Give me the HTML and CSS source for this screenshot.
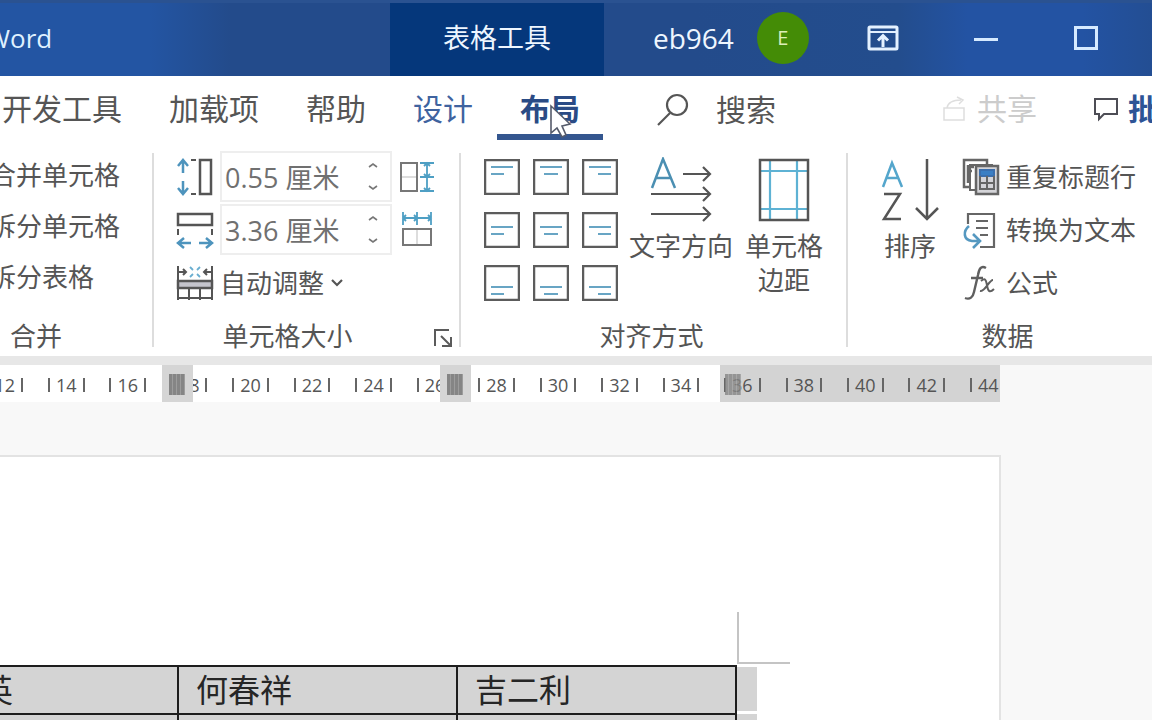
FILE: index.html
```html
<!DOCTYPE html>
<html lang="zh-CN">
<head>
<meta charset="utf-8">
<title>Word</title>
<link rel="stylesheet" href="styles.css">
</head>
<body>
<header class="titlebar">
  <div class="brand"><span>Word</span></div>
  <div class="context">表格工具</div>
  <div class="account"><span>eb964</span><span class="avatar">E</span></div>
  <div class="window">
    <button class="win" aria-label="功能区显示选项"><svg width="32" height="26" viewBox="0 0 32 26" fill="none" stroke="#e4f1ff" stroke-width="3"><rect x="2" y="2" width="28" height="22" rx="1"/><path d="M3 7H29" stroke-width="2"/><path d="M16 22V11M11 15.500L16 10.500L21 15.500"/></svg></button>
    <button class="win" aria-label="最小化"><svg width="26" height="26" viewBox="0 0 26 26"><path d="M1 14.500H25" stroke="#d6eaff" stroke-width="3"/></svg></button>
    <button class="win" aria-label="最大化"><svg width="26" height="26" viewBox="0 0 26 26" fill="none" stroke="#d6eaff" stroke-width="3"><rect x="2.500" y="2.500" width="21" height="21"/></svg></button>
  </div>
</header>

<div class="tabrow">
  <nav class="tabs">
    <button class="tab">开发工具</button>
    <button class="tab">加载项</button>
    <button class="tab">帮助</button>
    <button class="tab tool">设计</button>
    <button class="tab tool active">布局
      <svg class="cursor" width="24" height="36" viewBox="0 0 24 36"><path d="M2 2V29L8 24L13 33L17 31L13 22L21 20Z" fill="#fff" stroke="#555b6b" stroke-width="1.600"/></svg>
    </button>
  </nav>
  <button class="search"><svg width="34" height="34" viewBox="0 0 34 34" fill="none" stroke="#555" stroke-width="2.200"><circle cx="21" cy="12" r="10"/><path d="M14 20L2 32"/></svg>搜索</button>
  <div class="actions">
    <button class="share" disabled><svg width="26" height="26" viewBox="0 0 26 26" fill="none" stroke="#dedede" stroke-width="1.500"><path d="M2 12H22V24H2ZM5 12C6 6 12 4 19 4M15 1L21 4L17 8"/></svg>共享</button>
    <button class="comment"><svg width="26" height="26" viewBox="0 0 26 26" fill="none" stroke="#4d4d55" stroke-width="2"><path d="M2 3H24V18H11L6 23V18H2Z"/></svg>批注</button>
  </div>
</div>

<main class="ribbon">
  <section class="group merge">
    <div class="clip">
      <div class="body list">
        <button>合并单元格</button>
        <button>拆分单元格</button>
        <button>拆分表格</button>
      </div>
      <h2>合并</h2>
    </div>
  </section>

  <section class="group size">
    <div class="body sizes">
      <label for="h" aria-label="高度"><svg width="38" height="38" viewBox="0 0 38 38" fill="none" stroke="#555" stroke-width="2"><path d="M7 15V3M2 8L7 2L12 8M7 23V35M2 30L7 36L12 30" stroke="#4e94bd" stroke-width="2.500"/><path d="M15 2H20M15 36H20"/><rect x="24" y="2" width="11" height="34" stroke-width="2.500"/></svg></label>
      <div class="spin"><input id="h" value="0.55 厘米"><span class="arrows"><button aria-label="增大高度"><svg width="12" height="8" viewBox="0 0 12 8"><path d="M2 6L6 3L10 6" fill="none" stroke="#777" stroke-width="1.600"/></svg></button><button aria-label="减小高度"><svg width="12" height="8" viewBox="0 0 12 8"><path d="M2 2L6 5L10 2" fill="none" stroke="#777" stroke-width="1.600"/></svg></button></span></div>
      <button aria-label="分布行"><svg width="36" height="36" viewBox="0 0 36 36" fill="none" stroke="#777" stroke-width="2"><rect x="3" y="4" width="16" height="28"/><path d="M4 18H18" stroke="#ddd"/><path d="M22 4H36M22 18H36M22 32H36M29 4V32M26 7L29 4L32 7M26 15L29 18L32 15M26 29L29 32L32 29" stroke="#4e9fc4" stroke-width="1.800"/></svg></button>

      <label for="w" aria-label="宽度"><svg width="38" height="38" viewBox="0 0 38 38" fill="none" stroke="#555" stroke-width="2"><rect x="2" y="3" width="34" height="11" stroke-width="2.500"/><path d="M2 18V24M36 18V24"/><path d="M15 32H3M8 27L2 32L8 37M23 32H35M30 27L36 32L30 37" stroke="#4e94bd" stroke-width="2.500"/></svg></label>
      <div class="spin"><input id="w" value="3.36 厘米"><span class="arrows"><button aria-label="增大宽度"><svg width="12" height="8" viewBox="0 0 12 8"><path d="M2 6L6 3L10 6" fill="none" stroke="#777" stroke-width="1.600"/></svg></button><button aria-label="减小宽度"><svg width="12" height="8" viewBox="0 0 12 8"><path d="M2 2L6 5L10 2" fill="none" stroke="#777" stroke-width="1.600"/></svg></button></span></div>
      <button aria-label="分布列"><svg width="36" height="36" viewBox="0 0 36 36" fill="none" stroke="#777" stroke-width="2"><rect x="5" y="17" width="28" height="16"/><path d="M19 18V32" stroke="#ddd"/><path d="M5 0V13M19 0V13M33 0V13M5 6H33M8 3L5 6L8 9M16 3L19 6L16 9M30 3L33 6L30 9" stroke="#4e9fc4" stroke-width="1.800"/></svg></button>

      <button class="auto"><svg width="38" height="36" viewBox="0 0 38 36" fill="none" stroke="#555" stroke-width="2"><rect x="2" y="16" width="34" height="7" fill="#c4c4cc" stroke-width="2.500"/><path d="M2 1V35M36 1V35M2 7H10M28 7H36M7 4L10 7L7 10M31 4L28 7L31 10M2 33H36M13 24V35M24 24V35" /><path d="M14 2L17 5M24 2L21 5M14 12L17 9M24 12L21 9" stroke="#6aaed0" stroke-width="1.800"/></svg><span>自动调整</span><svg width="14" height="10" viewBox="0 0 14 10"><path d="M2 2L7 7L12 2" fill="none" stroke="#555" stroke-width="2.200"/></svg></button>
    </div>
    <h2>单元格大小</h2>
    <button class="launcher" aria-label="单元格大小设置"><svg width="20" height="20" viewBox="0 0 20 20" fill="none" stroke="#5b5b5b" stroke-width="2"><path d="M2 18V2H16M8 8L17 17M18 9V18H9"/></svg></button>
  </section>

  <section class="group align">
    <div class="body across">
      <div class="nine">
        <button aria-label="靠上左对齐"><svg viewBox="0 0 36 36"><path class="box" d="M1 1H35V35H1Z"/><path class="ln" d="M7 8H29M7 15H20"/></svg></button>
        <button aria-label="靠上居中"><svg viewBox="0 0 36 36"><path class="box" d="M1 1H35V35H1Z"/><path class="ln" d="M7 8H29M11 15H25"/></svg></button>
        <button aria-label="靠上右对齐"><svg viewBox="0 0 36 36"><path class="box" d="M1 1H35V35H1Z"/><path class="ln" d="M7 8H29M16 15H29"/></svg></button>
        <button aria-label="中部左对齐"><svg viewBox="0 0 36 36"><path class="box" d="M1 1H35V35H1Z"/><path class="ln" d="M7 15H29M7 22H20"/></svg></button>
        <button aria-label="水平居中"><svg viewBox="0 0 36 36"><path class="box" d="M1 1H35V35H1Z"/><path class="ln" d="M7 15H29M11 22H25"/></svg></button>
        <button aria-label="中部右对齐"><svg viewBox="0 0 36 36"><path class="box" d="M1 1H35V35H1Z"/><path class="ln" d="M7 15H29M16 22H29"/></svg></button>
        <button aria-label="靠下左对齐"><svg viewBox="0 0 36 36"><path class="box" d="M1 1H35V35H1Z"/><path class="ln" d="M7 22H29M7 29H20"/></svg></button>
        <button aria-label="靠下居中"><svg viewBox="0 0 36 36"><path class="box" d="M1 1H35V35H1Z"/><path class="ln" d="M7 22H29M11 29H25"/></svg></button>
        <button aria-label="靠下右对齐"><svg viewBox="0 0 36 36"><path class="box" d="M1 1H35V35H1Z"/><path class="ln" d="M7 22H29M16 29H29"/></svg></button>
      </div>
      <button class="big"><svg width="64" height="66" viewBox="0 0 64 66" fill="none" stroke="#555" stroke-width="2.200"><path d="M3 31L14 2L26 31M7 21H22" stroke="#4b8fb2" stroke-width="2.500"/><path d="M34 17H60M54 10L61 17L54 24M2 37H60M54 30L61 37L54 44M2 57H60M54 50L61 57L54 64"/></svg>文字方向</button>
      <button class="big"><svg width="52" height="66" viewBox="0 0 52 66" fill="none" stroke="#555" stroke-width="2.500"><path d="M12 3V63M39 3V63M2 14H50M2 52H50" stroke="#5eb2d4" stroke-width="2.200"/><rect x="2" y="3" width="48" height="60"/></svg>单元格<br>边距</button>
    </div>
    <h2>对齐方式</h2>
  </section>

  <section class="group data">
    <div class="body across">
      <button class="big"><svg width="58" height="66" viewBox="0 0 58 66" fill="none" stroke="#555" stroke-width="2.500"><path d="M2 30L11 6L21 30M5 21H18" stroke="#54a6cc"/><path d="M3 37H19L3 62H20"/><path d="M46 2V61M35 51L46 62L57 51"/></svg>排序</button>
      <div class="rows">
        <button><svg width="38" height="38" viewBox="0 0 38 38" fill="none" stroke="#666" stroke-width="2"><path d="M9 29H2V2H25V6M6 7V25M9 9H12M9 13H10" stroke-width="2.500"/><path d="M13 32H8V7H31" /><rect x="14" y="8" width="22" height="28" fill="#d4d4d8" stroke-width="2.500"/><rect x="18" y="12" width="14" height="6" fill="#3b7fc4" stroke="#3b6fae"/><path d="M18 18V31H32V18M25 18V31M18 25H32"/></svg>重复标题行</button>
        <button><svg width="38" height="38" viewBox="0 0 38 38" fill="none" stroke="#666" stroke-width="2.200"><path d="M6 13V3H32V36H18"/><path d="M14 10H26M14 17H26M18 24H26" stroke-width="1.800"/><path d="M7 15C1 20 1 29 10 30H16M11 23L18 30L11 37" stroke="#5598c0" stroke-width="2.600"/></svg>转换为文本</button>
        <button><svg width="38" height="38" viewBox="0 0 38 38" fill="none" stroke="#5f5f5f" stroke-width="2"><path d="M24 4C19 1 17 5 16 11L12 28C11 33 8 36 3 34M9 14H21" stroke-width="2.400"/><path d="M19 17C24 13 24 17 25 21C26 28 28 29 32 25M31 16C27 16 23 28 18 27"/></svg>公式</button>
      </div>
    </div>
    <h2>数据</h2>
  </section>
</main>

<div class="rulerbar">
  <div class="ruler">
    <div class="scale">
      <div><span>12</span></div><div><span>14</span></div><div><span>16</span></div><div><span>18</span></div><div><span>20</span></div><div><span>22</span></div><div><span>24</span></div><div><span>26</span></div><div><span>28</span></div><div><span>30</span></div><div><span>32</span></div><div><span>34</span></div><div><span>36</span></div><div><span>38</span></div><div><span>40</span></div><div><span>42</span></div><div><span>44</span></div>
    </div>
    <i class="marker m1"></i><i class="marker m2"></i><i class="marker m3"></i>
  </div>
</div>

<div class="workspace">
  <article class="page">
    <div class="sheet">
      <table class="names">
        <tr><td>英</td><td>何春祥</td><td>吉二利</td></tr>
        <tr><td></td><td></td><td></td></tr>
      </table>
      <div class="ends"><i></i><i></i></div>
      <i class="corner"></i>
    </div>
  </article>
</div>
</body>
</html>
```

FILE: styles.css
```css
* { box-sizing: border-box; }
body {
  margin: 0;
  height: 100vh;
  display: flex;
  flex-direction: column;
  overflow: hidden;
  background: #f8f8f8;
  color: #555;
  font: 26px/34px "Open Sans", "Noto Sans CJK SC", sans-serif;
}
button, input { font: inherit; color: inherit; border: 0; background: none; padding: 0; margin: 0; white-space: nowrap; }
svg { display: block; flex: none; }
h2 { margin: 0; font: inherit; text-align: center; }

.titlebar {
  flex: none;
  display: flex;
  height: 76px;
  color: #eef6ff;
  border-top: 3px solid #2a5291;
  background: linear-gradient(90deg, #2355a3 0 13%, #234b8b 20% 60%, #234d8d 78%, #2353a3 84% 94%, #234e93);
}
.titlebar > div { padding-bottom: 4px; }
.brand { flex: none; width: 390px; display: flex; align-items: center; overflow: hidden; }
.brand span { margin-left: -14px; color: #dff0ff; }
.context { flex: none; width: 214px; display: grid; place-items: center; background: #05377b; font-size: 27px; }
.account { flex: none; display: flex; align-items: center; gap: 23px; padding-left: 49px; font-size: 28px; }
.avatar { width: 52px; height: 52px; border-radius: 50%; background: #448c06; display: grid; place-items: center; font-size: 20px; color: #dcefb8; }
.window { flex: 1; display: flex; align-items: center; gap: 74px; padding-left: 58px; }

.tabrow { flex: none; display: flex; height: 64px; background: #fff; font-size: 30px; overflow: hidden; }
.tabs { flex: none; width: 603px; display: flex; justify-content: flex-end; gap: 1px; }
.tab { position: relative; flex: none; padding: 2px 23px 0; border-top: 6px solid transparent; border-bottom: 6px solid transparent; }
.tabrow .tool { color: #3f639f; }
.tabrow .active { color: #2a4b85; font-weight: 700; border-bottom-color: #34568f; }
.cursor { position: absolute; left: 52px; top: 22px; }
.search { flex: none; display: flex; align-items: center; gap: 26px; padding: 4px 0 0 53px; }
.actions { flex: 1; display: flex; align-items: center; gap: 56px; padding: 2px 0 0 166px; }
.actions button { flex: none; display: flex; align-items: center; gap: 9px; }
.share { color: #ccc; }
.comment { font-weight: 700; color: #2d5496; }

.ribbon { flex: none; display: flex; padding: 10px 0 3px; background: #fff; overflow: hidden; }
.group { position: relative; flex: none; }
.group:not(.data)::after { content: ""; position: absolute; right: 0; top: 3px; bottom: 6px; width: 2px; background: #ddd; }
.group h2 { margin-top: 8px; }
.body { height: 161px; }
.body button { text-align: left; }
.merge { width: 154px; overflow: hidden; }
.clip { width: 232px; margin-left: -80px; }
.list { display: grid; grid-template-rows: repeat(3, 51px); padding: 2px 0 0 70px; align-content: start; }
.list button { padding-bottom: 6px; }

.size { width: 307px; padding: 0 24px 0 22px; }
.size h2 { padding-right: 38px; }
.sizes { display: grid; grid-template-columns: 38px 172px 36px; grid-template-rows: repeat(3, 53px); column-gap: 6px; align-items: center; }
.spin { display: flex; height: 51px; border: 2px solid #eee; color: #707070; }
.spin input { flex: 1; width: 0; padding: 2px 0 0 3px; outline: 0; font-size: 27px; }
.arrows { width: 34px; display: flex; flex-direction: column; justify-content: space-between; align-items: center; padding: 8px 0; }
.auto { grid-column: 1 / 4; display: flex; align-items: center; gap: 6px; }
.launcher { position: absolute; right: 8px; bottom: 5px; }

.align { width: 387px; padding-left: 23px; }
.align h2 { padding-right: 29px; }
.across { display: flex; align-items: flex-start; }
.nine { display: grid; grid-template-columns: repeat(3, 36px); gap: 17px 13px; padding-top: 9px; }
.nine svg { width: 36px; height: 36px; fill: none; }
.box { stroke: #5c5c5c; stroke-width: 2.5; }
.ln { stroke: #68a5c4; stroke-width: 2.2; }
.body .big { display: flex; flex-direction: column; align-items: center; text-align: center; padding-top: 7px; gap: 6px; }
.align .nine + .big { margin-left: 11px; margin-right: 12px; }

.data { flex: 1; padding-left: 33px; }
.data h2 { padding-right: 18px; }
.data .across { gap: 23px; }
.rows { display: grid; grid-template-rows: repeat(3, 53px); }
.rows button { display: flex; align-items: center; gap: 6px; }

.rulerbar { flex: none; border-top: 9px solid #e7e7e7; }
.ruler { position: relative; width: 1000px; height: 37px; overflow: hidden; background: linear-gradient(90deg, #fff 720px, #d3d3d3 720px); }
.scale { display: grid; grid-template-columns: repeat(17, 1fr); width: 1045px; height: 37px; margin-left: -26px; align-items: center; justify-items: center; padding-top: 3px; }
.scale span { display: block; border: solid #666; border-width: 0 2px; padding: 0 6px; font-size: 18px; line-height: 14px; }
.marker { position: absolute; top: 0; width: 31px; height: 37px; border: solid #d5d5d5; border-width: 9px 8px 7px 7px; background: repeating-linear-gradient(90deg, #858585 0 3px, #9c9c9c 3px 4px); }
.m1 { left: 162px; }
.m2 { left: 440px; }
.m3 { left: 725px; width: 16px; height: 21px; top: 9px; border: 0; opacity: .8; }

.workspace { flex: 1; min-height: 0; padding-top: 53px; overflow: hidden; }
.page { width: 1001px; height: 100%; padding-top: 208px; background: #fff; border: 2px solid #e3e3e3; border-width: 2px 2px 0 0; }
.sheet { position: relative; display: flex; width: max-content; }
.names { width: 839px; margin-left: -102px; table-layout: fixed; border-collapse: collapse; font-size: 32px; line-height: 46px; color: #262626; background: #d4d4d4; }
.names td { height: 48px; padding: 0 0 0 17px; border: 2px solid #1d1d1d; }
.names td:first-child { padding-left: 81px; }
.ends { width: 20px; display: grid; grid-template-rows: 44px 44px; gap: 3px; padding-top: 2px; }
.ends i { background: #d4d4d4; }
.corner { position: absolute; left: 737px; top: -53px; width: 53px; height: 52px; border: solid #c4c4c4; border-width: 0 0 2px 2px; }
```
